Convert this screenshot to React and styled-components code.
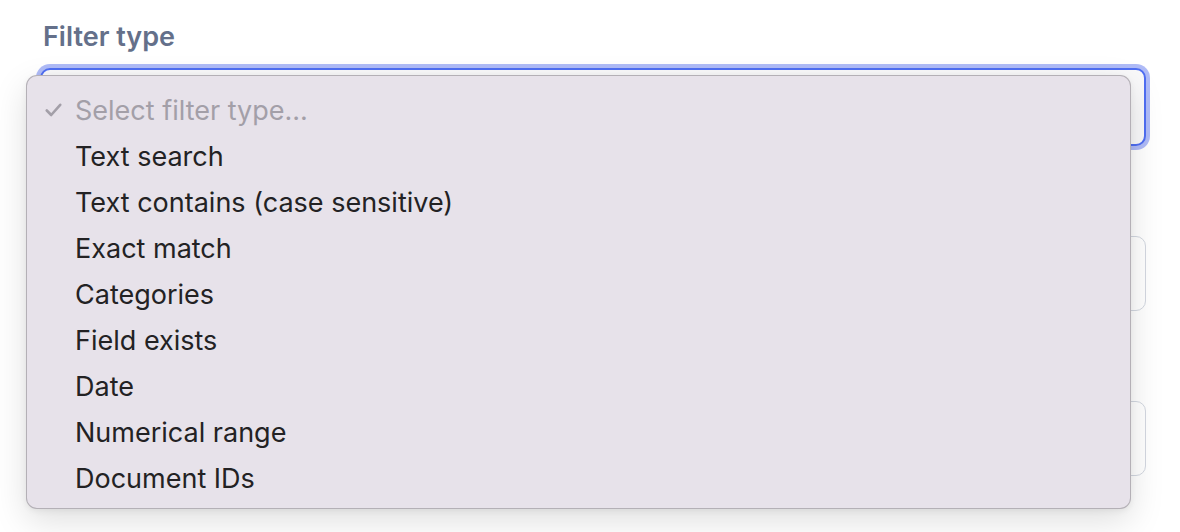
import React from 'react';
import styled, { createGlobalStyle } from 'styled-components';

const GlobalStyle = createGlobalStyle`
  html, body {
    margin: 0;
    padding: 0;
    background: #ffffff;
    font-family: Inter, "Liberation Sans", sans-serif;
    overflow: hidden;
  }
`;

const Page = styled.div`
  width: 1180px;
  height: 532px;
  padding: 20px 34px 0 40px;
  box-sizing: border-box;
`;

const Form = styled.div`
  position: relative;
  display: flex;
  flex-direction: column;
  gap: 90px;
`;

const Field = styled.div`
  display: flex;
  flex-direction: column;
  gap: 14px;
`;

const Label = styled.label`
  font-size: 27px;
  line-height: 34px;
  font-weight: 600;
  color: #64708a;
  padding-left: 3px;
`;

const SelectBox = styled.div`
  height: 78px;
  box-sizing: border-box;
  border: 2px solid #4f6ef2;
  border-radius: 10px;
  background: #f9f9fa;
  box-shadow: 0 0 0 4px rgba(109, 132, 240, 0.55);
`;

const Input = styled.div`
  height: 75px;
  box-sizing: border-box;
  border: 1.5px solid #d3d8e1;
  border-radius: 10px;
  background: #ffffff;
`;

const Menu = styled.ul`
  position: absolute;
  left: -14px;
  top: 55px;
  width: 1105px;
  height: 434px;
  box-sizing: border-box;
  margin: 0;
  padding: 11px 0 8px;
  list-style: none;
  background: #e7e2ea;
  border: 1px solid rgba(0, 0, 0, 0.22);
  border-radius: 11px;
  box-shadow: 0 12px 34px rgba(0, 0, 0, 0.13), 0 2px 6px rgba(0, 0, 0, 0.06);
`;

const Option = styled.li`
  position: relative;
  height: 46px;
  display: flex;
  align-items: center;
  padding-left: 48px;
  font-size: 27px;
  color: ${(p) => (p.$placeholder ? '#a39fa8' : '#232224')};
`;

const Check = styled.svg`
  position: absolute;
  left: 18px;
  top: 16px;
  width: 17px;
  height: 14px;
`;

const options = [
  'Text search',
  'Text contains (case sensitive)',
  'Exact match',
  'Categories',
  'Field exists',
  'Date',
  'Numerical range',
  'Document IDs',
];

export default function App() {
  return (
    <Page>
      <GlobalStyle />
      <Form>
        <Field>
          <Label>Filter type</Label>
          <SelectBox />
        </Field>
        <Input />
        <Input />
        <Menu>
          <Option $placeholder>
            <Check viewBox="0 0 17 14">
              <path d="M1.8 7.5 L6.2 12 L15.2 1.8" fill="none" stroke="#a39fa8" strokeWidth="2.6" strokeLinecap="round" strokeLinejoin="round" />
            </Check>
            Select filter type...
          </Option>
          {options.map((o) => (
            <Option key={o}>{o}</Option>
          ))}
        </Menu>
      </Form>
    </Page>
  );
}
